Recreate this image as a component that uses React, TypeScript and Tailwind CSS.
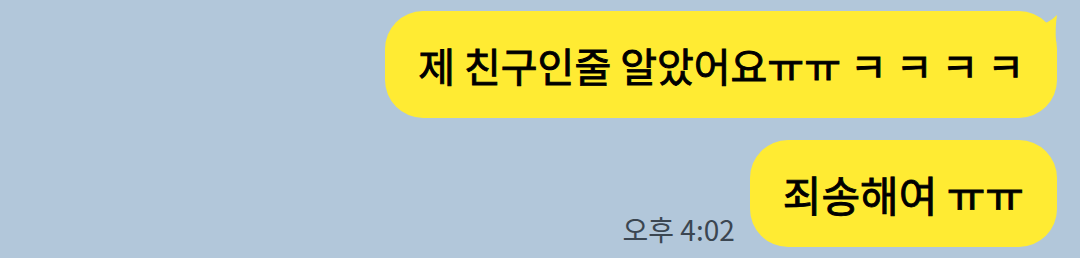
import React from 'react';

const font = { fontFamily: '"Noto Sans CJK KR", "Noto Sans", sans-serif' };

function Bubble({ children, tail = false, size }: { children: React.ReactNode; tail?: boolean; size: string }) {
    return (
        <div className="relative">
            <div className={`bg-[#ffeb33] rounded-[38px] h-[107px] px-[33px] flex items-center text-black font-normal [-webkit-text-stroke:0.9px_black] leading-none whitespace-nowrap ${size}`}>
                {children}
            </div>
            {tail && (
                <svg className="absolute -right-[4px] top-[2px]" width="22" height="30" viewBox="0 0 22 30">
                    <path d="M0 12 Q10 10 18 2 Q16 14 17 30 L0 30 Z" fill="#ffeb33" />
                </svg>
            )}
        </div>
    );
}

export default function App() {
    return (
        <div className="w-[1080px] h-[258px] bg-[#b2c7da] overflow-hidden" style={font}>
            <div className="flex flex-col items-end pr-[23px] pt-[11px] gap-[22px]">
                <Bubble tail size="text-[40px]">제 친구인줄 알았어요ㅠㅠ ㅋ ㅋ ㅋ ㅋ</Bubble>
                <div className="flex items-end gap-[15px]">
                    <span className="text-[28px] text-[#3b4651] leading-none pb-[4px]">오후 4:02</span>
                    <Bubble size="text-[42px]">죄송해여 ㅠㅠ</Bubble>
                </div>
            </div>
        </div>
    );
}
